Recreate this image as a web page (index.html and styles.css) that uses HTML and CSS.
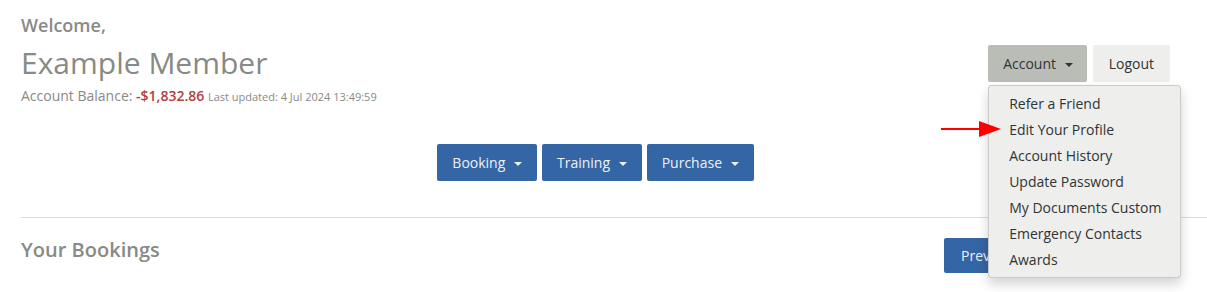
FILE: index.html
```html
<!DOCTYPE html>
<html lang="en">
<head>
  <meta charset="UTF-8" />
  <meta name="viewport" content="width=device-width, initial-scale=1.0"/>
  <title>Member Home</title>
  <link rel="stylesheet" href="styles.css">
</head>
<body>
  <div class="page">
    <div class="header">
      <div class="welcome">
        <h4>Welcome,</h4>
        <h1>Example Member</h1>
        <p class="balance">Account Balance: <span class="owing">-$1,832.86</span> <small>Last updated: 4 Jul 2024 13:49:59</small></p>
      </div>
      <div class="user-menu">
        <div class="account">
          <button class="btn btn-account">Account <span class="caret"></span></button>
          <ul class="dropdown">
            <li>Refer a Friend</li>
            <li>Edit Your Profile</li>
            <li>Account History</li>
            <li>Update Password</li>
            <li>My Documents Custom</li>
            <li>Emergency Contacts</li>
            <li>Awards</li>
          </ul>
        </div>
        <button class="btn btn-logout">Logout</button>
      </div>
    </div>

    <div class="main-nav">
      <button class="btn btn-blue">Booking <span class="caret"></span></button>
      <button class="btn btn-blue">Training <span class="caret"></span></button>
      <button class="btn btn-blue">Purchase <span class="caret"></span></button>
    </div>

    <hr class="divider">

    <div class="bookings">
      <h3>Your Bookings</h3>
      <div class="pager">
        <button class="btn btn-blue btn-pager">Previous</button>
        <button class="btn btn-blue btn-pager">Next</button>
      </div>
    </div>

    <!-- annotation arrow pointing at Edit Your Profile -->
    <svg class="pointer" width="62" height="24" viewBox="0 0 62 24">
      <line x1="0" y1="11" x2="44" y2="11" stroke="#f00" stroke-width="2"/>
      <polygon points="38,3 60,11 38,19" fill="#f00"/>
    </svg>
  </div>
</body>
</html>
```

FILE: styles.css
```css
body {
  margin: 0;
  font-family: "Open Sans", "Liberation Sans", sans-serif;
  color: #888a85;
  background: white;
}

.page {
  position: relative;
  box-sizing: border-box;
  height: 292px;
  overflow: hidden;
  padding: 12px 37px 0 21px;
}

.header {
  display: flex;
  justify-content: space-between;
  align-items: flex-start;
}

.welcome h4 {
  margin: 0;
  font-size: 18px;
  font-weight: 600;
  line-height: 27px;
}

.welcome h1 {
  margin: 4px 0 0 0;
  font-size: 30px;
  font-weight: 400;
  line-height: 40px;
}

.balance {
  margin: 3px 0 0 0;
  font-size: 14px;
  line-height: 20px;
}

.owing {
  color: #b0413e;
  font-weight: 600;
}

.balance small {
  font-size: 11px;
}

.user-menu {
  display: flex;
  gap: 6px;
  margin-top: 33px;
}

.account {
  position: relative;
}

.btn {
  font-family: inherit;
  font-size: 14px;
  line-height: 21px;
  padding: 8px 15px;
  border: none;
  border-radius: 2px;
  cursor: pointer;
}

.btn-account {
  background-color: #babdb6;
  color: #2e3436;
  padding: 8px 14px 8px 15px;
}

.btn-logout {
  background-color: #eeeeec;
  color: #2e3436;
  padding: 8px 16px;
}

.caret {
  display: inline-block;
  width: 0;
  height: 0;
  margin-left: 5px;
  vertical-align: middle;
  border-top: 4px solid;
  border-left: 4px solid transparent;
  border-right: 4px solid transparent;
}

.dropdown {
  position: absolute;
  top: 40px;
  left: 0;
  width: 191px;
  z-index: 5;
  margin: 0;
  padding: 5px 0 4px;
  list-style: none;
  background-color: #eeeeec;
  border: 1px solid rgba(0, 0, 0, 0.15);
  border-radius: 4px;
  box-shadow: 0 6px 12px rgba(0, 0, 0, 0.175);
}

.dropdown li {
  padding: 3px 20px;
  font-size: 14px;
  line-height: 20px;
  color: #2e3436;
  white-space: nowrap;
}

.main-nav {
  display: flex;
  justify-content: center;
  gap: 5px;
  margin-top: 37px;
}

.btn-blue {
  background-color: #3465a4;
  color: #eef2f8;
  padding: 8px 15px;
}

.divider {
  border: none;
  border-top: 1px solid #dcdcdc;
  margin: 36px -37px 0 0;
}

.bookings {
  display: flex;
  justify-content: space-between;
  align-items: flex-start;
  margin-top: 20px;
}

.bookings h3 {
  margin: 0;
  font-size: 20px;
  font-weight: 600;
  line-height: 24px;
}

.pager {
  display: flex;
  gap: 4px;
}

.btn-pager {
  min-width: 111px;
  text-align: left;
  padding: 7px 17px;
}

.pointer {
  position: absolute;
  z-index: 10;
  left: 941px;
  top: 118px;
}
```
